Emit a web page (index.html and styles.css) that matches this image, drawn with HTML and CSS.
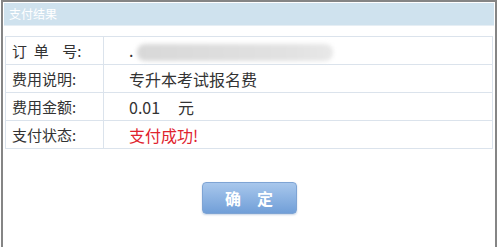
FILE: index.html
```html
<!DOCTYPE html>
<html lang="zh">
<head>
<meta charset="utf-8">
<link rel="stylesheet" href="styles.css">
</head>
<body>
<div class="window">
  <div class="titlebar">支付结果</div>
  <table class="info">
    <tr><td class="label">订&nbsp;&nbsp;单&nbsp;&nbsp;&nbsp;&nbsp;号:</td><td class="value"><span class="masked"><span class="dot">.</span><span class="blur"></span></span></td></tr>
    <tr><td class="label">费用说明:</td><td class="value">专升本考试报名费</td></tr>
    <tr><td class="label">费用金额:</td><td class="value">0.01<span class="gap"></span>元</td></tr>
    <tr><td class="label">支付状态:</td><td class="value success">支付成功!</td></tr>
  </table>
  <div class="actions">
    <button class="ok">确<span class="btngap"></span>定</button>
  </div>
</div>
</body>
</html>
```

FILE: styles.css
```css
html, body {
  margin: 0;
  padding: 0;
  background: #ffffff;
}
body {
  font-family: "Noto Sans CJK SC", "Noto Sans", sans-serif;
  color: #333333;
}
.window {
  margin-left: 1px;
  width: 496px;
  height: 247px;
  box-sizing: border-box;
  border-left: 2px solid #858585;
  border-right: 2px solid #858585;
  border-top: 2px solid #858585;
  padding: 1px 1px 0 1px;
}
.titlebar {
  height: 22px;
  line-height: 22px;
  background: #cfe2ee;
  color: #ffffff;
  font-size: 12px;
  padding-left: 5px;
  border-bottom: 1px solid #e6eef4;
}
.info {
  margin: 10px 0 0 1px;
  width: 488px;
  border-collapse: collapse;
  border: 1px solid #dbe3ec;
  font-size: 16px;
}
.info td {
  border: 1px solid #dbe3ec;
  height: 27px;
  padding: 0;
  line-height: 20px;
}
.label {
  width: 91px;
  padding-left: 6px !important;
  white-space: nowrap;
  font-size: 15px;
}
.value {
  padding-left: 25px !important;
}
.gap {
  display: inline-block;
  width: 18px;
}
.success {
  color: #e0232e;
}
.masked {
  position: relative;
  display: inline-block;
  width: 206px;
  height: 20px;
  vertical-align: middle;
}
.dot {
  position: absolute;
  left: 0;
  top: -2px;
}
.blur {
  position: absolute;
  left: 8px;
  top: 2px;
  width: 196px;
  height: 17px;
  border-radius: 8px;
  background: linear-gradient(90deg, #d8d8d8, #e2e2e2 80%, #e8e8e8);
  filter: blur(2px);
}
.actions {
  display: flex;
  justify-content: center;
  padding-top: 33px;
}
.ok {
  display: flex;
  align-items: center;
  justify-content: center;
  width: 95px;
  height: 32px;
  border: 1px solid #7ea4d4;
  border-radius: 4px;
  background: linear-gradient(#a8c7ec, #719fd8);
  color: #ffffff;
  font-family: "Noto Sans CJK SC", sans-serif;
  font-size: 16px;
  font-weight: bold;
  padding: 0;
  box-shadow: 0 1px 2px rgba(120,150,190,0.4);
}
.btngap {
  display: inline-block;
  width: 16px;
}
```
